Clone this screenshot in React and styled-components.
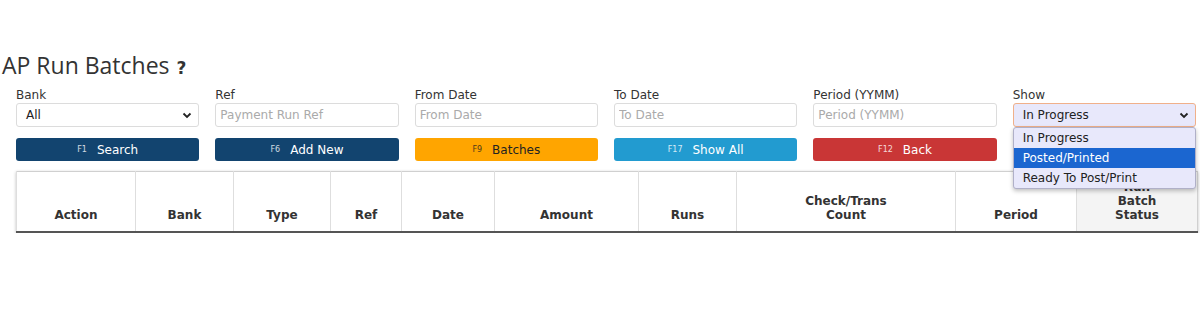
import { useState } from "react";
import styled, { createGlobalStyle } from "styled-components";

const GlobalStyle = createGlobalStyle`
    body{
        margin: 0;
        background: #ffffff;
        font-family: "DejaVu Sans", Verdana, sans-serif;
        color: #333333;
    }
`;

const filters = [
    { label: "Bank", kind: "select", value: "All" },
    { label: "Ref", placeholder: "Payment Run Ref" },
    { label: "From Date", placeholder: "From Date" },
    { label: "To Date", placeholder: "To Date" },
    { label: "Period (YYMM)", placeholder: "Period (YYMM)" },
    { label: "Show", kind: "show", value: "In Progress" },
];

const buttons = [
    { key: "F1", text: "Search", color: "#12446f" },
    { key: "F6", text: "Add New", color: "#12446f" },
    { key: "F9", text: "Batches", color: "#ffa500", dark: true },
    { key: "F17", text: "Show All", color: "#229bd0" },
    { key: "F12", text: "Back", color: "#c93636" },
];

const columns = [
    { title: "Action", width: 119 },
    { title: "Bank", width: 98 },
    { title: "Type", width: 97 },
    { title: "Ref", width: 71 },
    { title: "Date", width: 93 },
    { title: "Amount", width: 144 },
    { title: "Runs", width: 98 },
    { title: "Check/Trans\nCount", width: 219 },
    { title: "Period", width: 121 },
    { title: "Run\nBatch\nStatus", width: 121, shaded: true },
];

const showOptions = ["In Progress", "Posted/Printed", "Ready To Post/Print"];

function Chevron(){
    return (
        <svg width="10" height="7" viewBox="0 0 10 7">
            <path d="M1.5 1.5 L5 5 L8.5 1.5" fill="none" stroke="#222" strokeWidth="1.8" />
        </svg>
    );
}

function ShowSelect({ value }){
    const [hovered] = useState(1);
    return (
        <SelectWrap>
            <FakeSelect focused>
                <span>{value}</span>
                <Chevron />
            </FakeSelect>
            <OptionList>
                {showOptions.map((opt, i) => (
                    <Option key={opt} active={i === hovered}>{opt}</Option>
                ))}
            </OptionList>
        </SelectWrap>
    );
}

function Filter({ item }){
    return (
        <Field>
            <Label>{item.label}</Label>
            {item.kind === "select" && (
                <FakeSelect>
                    <span>{item.value}</span>
                    <Chevron />
                </FakeSelect>
            )}
            {item.kind === "show" && <ShowSelect value={item.value} />}
            {!item.kind && <TextInput placeholder={item.placeholder} />}
        </Field>
    );
}

export default function App(){
    return (
        <>
            <GlobalStyle />
            <Page>
                <Title>
                    AP Run Batches <Help>?</Help>
                </Title>
                <Grid>
                    {filters.map(f => <Filter key={f.label} item={f} />)}
                    {buttons.map(b => (
                        <ActionButton key={b.text} color={b.color} dark={b.dark}>
                            <small>{b.key}</small>{b.text}
                        </ActionButton>
                    ))}
                </Grid>
                <Table>
                    <colgroup>
                        {columns.map(c => <col key={c.title} style={{ width: c.width }} />)}
                    </colgroup>
                    <thead>
                        <tr>
                            {columns.map(c => (
                                <HeadCell key={c.title} shaded={c.shaded}>{c.title}</HeadCell>
                            ))}
                        </tr>
                    </thead>
                </Table>
            </Page>
        </>
    );
}

//Style
const Page = styled.div`
    padding: 48px 0 0 0;
`;

const Title = styled.h1`
    margin: 0 0 0 2px;
    font-family: "Open Sans", "Noto Sans", sans-serif;
    font-weight: 400;
    font-size: 23px;
    line-height: 34px;
    color: #333333;
`;

const Help = styled.span`
    font-family: "DejaVu Sans", sans-serif;
    font-weight: 700;
    font-size: 17px;
    color: #333333;
    margin-left: 1px;
`;

const Grid = styled.div`
    display: grid;
    grid-template-columns: repeat(6, 1fr);
    column-gap: 16px;
    row-gap: 11px;
    margin: 3px 4px 0 16px;
`;

const Field = styled.div`
    display: flex;
    flex-direction: column;
`;

const Label = styled.label`
    font-size: 12px;
    line-height: 15px;
    color: #333333;
`;

const TextInput = styled.input`
    box-sizing: border-box;
    height: 24px;
    width: 100%;
    padding: 0 4px;
    border: 1px solid #dcdcdc;
    border-radius: 3px;
    font-family: "DejaVu Sans", sans-serif;
    font-size: 12px;
    color: #333;
    background: #fff;
    &::placeholder{
        color: #aaaaaa;
    }
`;

const FakeSelect = styled.div`
    box-sizing: border-box;
    height: 24px;
    display: flex;
    align-items: center;
    justify-content: space-between;
    padding: 0 6px 0 9px;
    border: 1px solid ${p => (p.focused ? "#f0b08a" : "#dcdcdc")};
    border-radius: 3px;
    background: ${p => (p.focused ? "#e8e8fb" : "#ffffff")};
    font-size: 12px;
    color: #222;
`;

const SelectWrap = styled.div`
    position: relative;
`;

const OptionList = styled.div`
    position: absolute;
    top: 24px;
    left: 0;
    right: 0;
    z-index: 5;
    background: #e8e8fb;
    border: 1px solid #b0b0c8;
    border-radius: 3px;
    box-shadow: 0 2px 4px rgba(0,0,0,0.25);
`;

const Option = styled.div`
    height: 20px;
    line-height: 20px;
    padding-left: 9px;
    font-size: 12px;
    color: ${p => (p.active ? "#ffffff" : "#222222")};
    background: ${p => (p.active ? "#1b66d0" : "transparent")};
`;

const ActionButton = styled.button`
    height: 23px;
    border: none;
    border-radius: 3px;
    background: ${p => p.color};
    color: ${p => (p.dark ? "#222222" : "#ffffff")};
    font-family: "DejaVu Sans", sans-serif;
    font-size: 12px;
    display: flex;
    align-items: center;
    justify-content: center;
    padding: 0;
    small{
        font-size: 8px;
        margin-right: 10px;
        opacity: 0.8;
    }
`;

const Table = styled.table`
    margin: 10px 0 0 16px;
    width: 1181px;
    border-collapse: collapse;
    table-layout: fixed;
    border: 1px solid #d0d0d0;
    border-bottom: 2px solid #555555;
    box-shadow: 0 1px 3px rgba(0,0,0,0.25);
`;

const HeadCell = styled.th`
    height: 60px;
    box-sizing: border-box;
    vertical-align: bottom;
    padding: 0 4px 9px;
    font-size: 12px;
    line-height: 14px;
    font-weight: 700;
    color: #333333;
    text-align: center;
    white-space: pre-line;
    border-left: 1px solid #dedede;
    background: ${p => (p.shaded ? "#f4f4f4" : "#ffffff")};
`;
